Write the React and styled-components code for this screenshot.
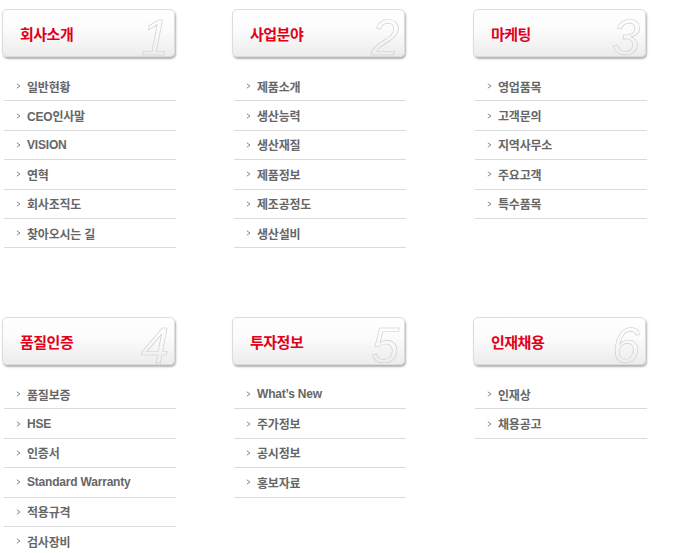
import React from "react";
import styled, { createGlobalStyle } from "styled-components";

const GlobalStyle = createGlobalStyle`
  html, body { margin: 0; padding: 0; background: #ffffff; }
  * { box-sizing: border-box; }
`;

const Page = styled.div`
  display: grid;
  grid-template-columns: 230px 241px 175px;
  grid-template-rows: 308px auto;
  padding: 9px 0 0 2px;
  font-family: "Liberation Sans", "Noto Sans CJK KR", sans-serif;
`;

const Section = styled.section`
  display: flex;
  flex-direction: column;
  align-items: flex-start;
`;

const Card = styled.div`
  position: relative;
  width: 173px;
  height: 48px;
  border: 1px solid #dcdcdc;
  border-radius: 5px;
  background: linear-gradient(#ffffff 0%, #fbfbfb 45%, #ececec 100%);
  box-shadow: 1px 2px 2px rgba(0, 0, 0, 0.3);
  display: flex;
  align-items: center;
  padding-left: 17px;
`;

const Title = styled.h2`
  margin: 0;
  font-family: "Noto Sans CJK KR", sans-serif;
  font-weight: 700;
  font-size: 15px;
  letter-spacing: -0.5px;
  color: #e2001a;
`;

const Digit = styled.span`
  position: absolute;
  right: 5px;
  bottom: 0;
  font-family: "Liberation Sans", sans-serif;
  font-style: italic;
  font-weight: 400;
  font-size: 50px;
  line-height: 36px;
  color: transparent;
  -webkit-text-stroke: 0.6px #cdcdcd;
`;

const List = styled.ul`
  list-style: none;
  margin: 15px 0 0 2px;
  padding: 0;
  width: 172px;
`;

const Item = styled.li`
  height: 29.4px;
  border-bottom: 1px solid #dadada;
  display: flex;
  align-items: center;
  gap: 6px;
  padding-left: 12px;
  font-family: "Liberation Sans", "Noto Sans CJK KR", sans-serif;
  font-weight: 700;
  font-size: 12px;
  color: #666666;
  letter-spacing: -0.2px;
`;

const Chevron = () => (
  <svg width="5" height="6" viewBox="0 0 5 6" aria-hidden="true">
    <polyline points="0.8,0.8 4,3 0.8,5.2" fill="none" stroke="#8a8a8a" strokeWidth="1" />
  </svg>
);

const sections = [
  { title: "회사소개", n: "1", items: ["일반현황", "CEO인사말", "VISION", "연혁", "회사조직도", "찾아오시는 길"] },
  { title: "사업분야", n: "2", items: ["제품소개", "생산능력", "생산재질", "제품정보", "제조공정도", "생산설비"] },
  { title: "마케팅", n: "3", items: ["영업품목", "고객문의", "지역사무소", "주요고객", "특수품목"] },
  { title: "품질인증", n: "4", items: ["품질보증", "HSE", "인증서", "Standard Warranty", "적용규격", "검사장비"] },
  { title: "투자정보", n: "5", items: ["What\u2019s New", "주가정보", "공시정보", "홍보자료"] },
  { title: "인재채용", n: "6", items: ["인재상", "채용공고"] },
];

export default function App() {
  return (
    <>
      <GlobalStyle />
      <Page>
        {sections.map((s) => (
          <Section key={s.n}>
            <Card>
              <Title>{s.title}</Title>
              <Digit>{s.n}</Digit>
            </Card>
            <List>
              {s.items.map((it) => (
                <Item key={it}>
                  <Chevron />
                  <span>{it}</span>
                </Item>
              ))}
            </List>
          </Section>
        ))}
      </Page>
    </>
  );
}
